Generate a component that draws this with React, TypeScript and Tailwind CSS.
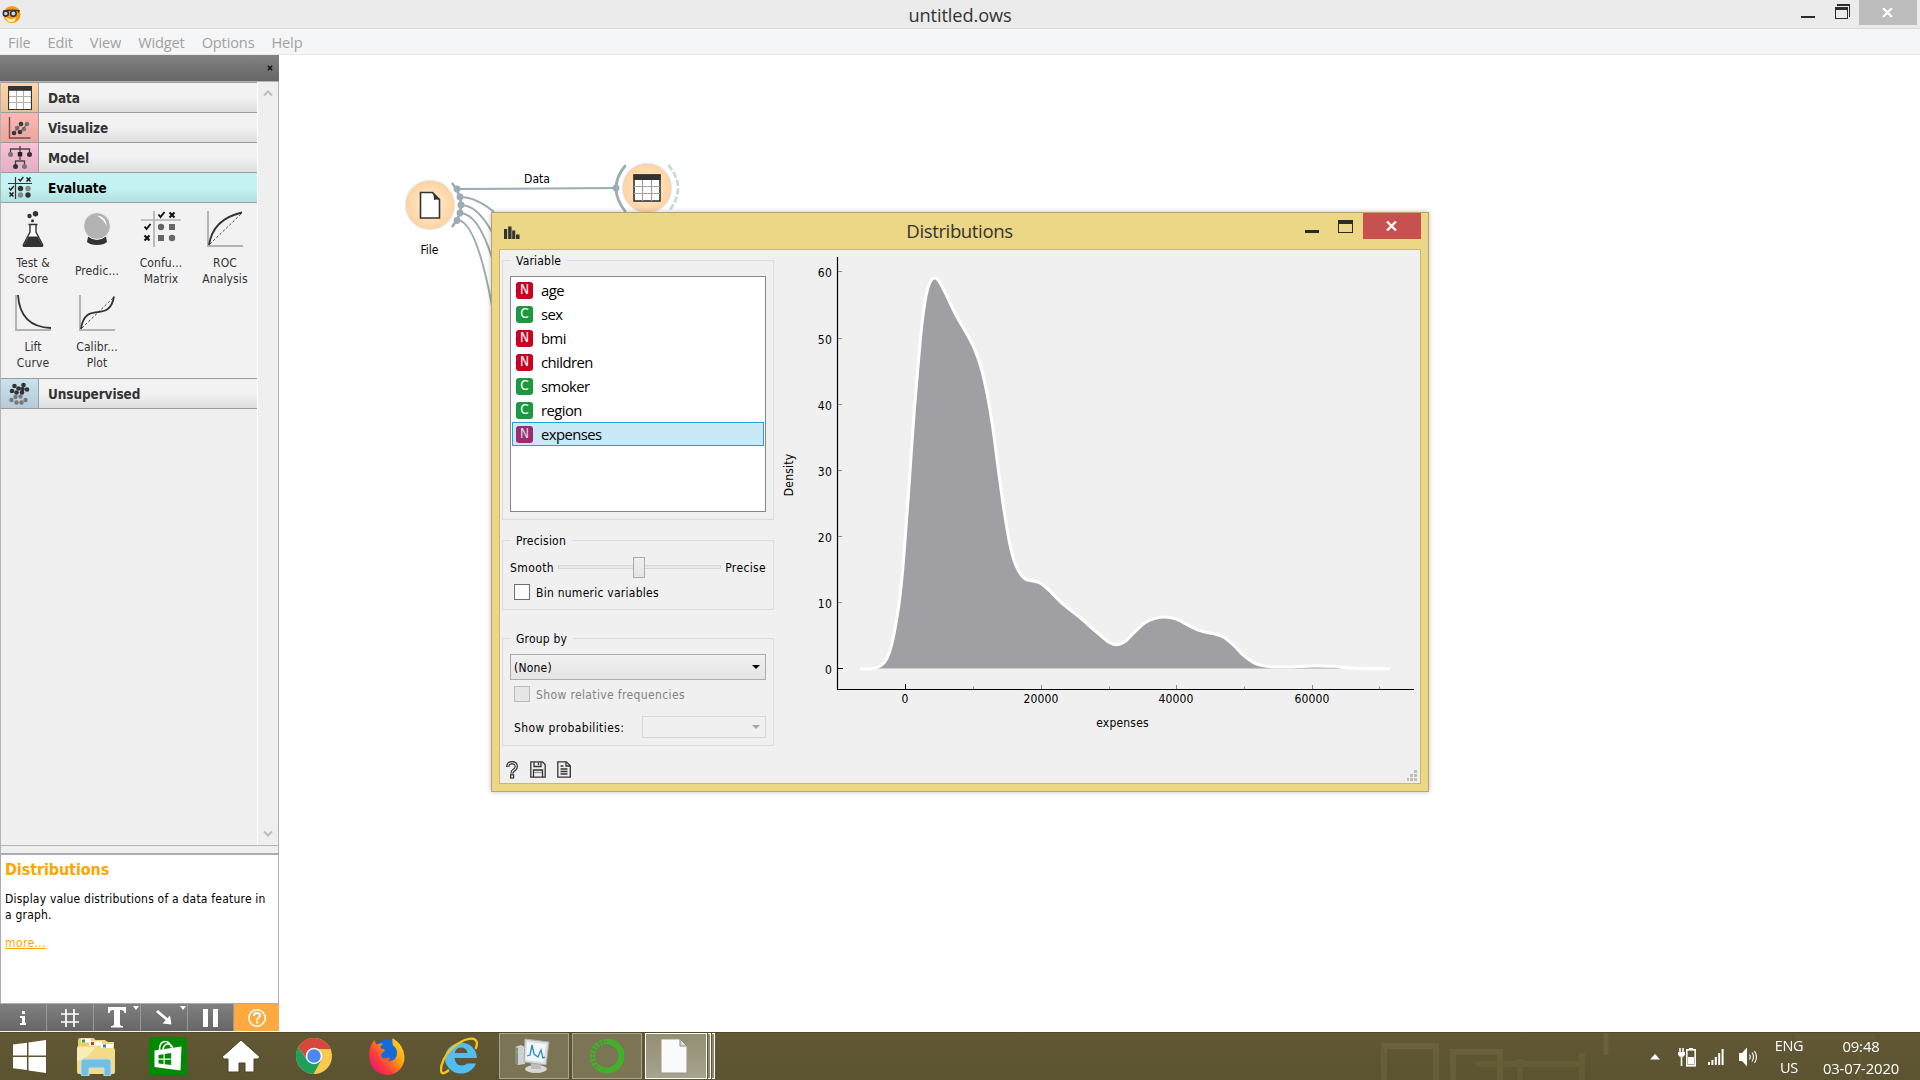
import React from "react";

const TAHOMA = "font-['DejaVu_Sans_Condensed','DejaVu_Sans',sans-serif] [font-stretch:condensed]";
const SEGOE = "font-['Open_Sans','Noto_Sans',sans-serif] [font-stretch:normal]";

/* ---------- category icons ---------- */

function TableIcon({ className = "" }: { className?: string }) {
  return (
    <svg viewBox="0 0 24 24" className={className}>
      <rect x="0.5" y="0.5" width="23" height="23" fill="#fff" stroke="#333" />
      <path d="M8.5 4v19M15.5 4v19M1 10.5h22M1 16.5h22" stroke="#b5b0aa" strokeWidth="1.2" />
      <rect x="0" y="0" width="24" height="4.8" fill="#333" />
      <path d="M0.5 0v23.5h23V0" fill="none" stroke="#333" strokeWidth="1.2" />
    </svg>
  );
}

function ScatterIcon() {
  return (
    <svg viewBox="0 0 24 24" className="h-6 w-6">
      <path d="M1.5 1v21h21" fill="none" stroke="#7a4a4a" strokeWidth="1.4" />
      <g fill="#333"><circle cx="6" cy="17" r="2.3" /><circle cx="12" cy="16" r="2.3" /><circle cx="13" cy="8" r="2.3" /></g>
      <g fill="#777"><circle cx="9" cy="12" r="2.3" /><circle cx="16" cy="13" r="2.3" /><circle cx="19" cy="8" r="2.3" /></g>
      <path d="M6 17l7-9M12 16l7-8" stroke="#555" strokeWidth="1" />
    </svg>
  );
}

function TreeIcon() {
  return (
    <svg viewBox="0 0 24 24" className="h-6 w-6">
      <path d="M12 0v8M2.500 8V3h19v5M12 8v6M7.500 19v-4h9v4" fill="none" stroke="#444" strokeWidth="1.300" />
      <rect x="9.800" y="6" width="4.400" height="4.400" fill="#222" />
      <circle cx="2.500" cy="8.500" r="2.500" fill="#777" />
      <circle cx="21.500" cy="8.500" r="2.500" fill="#333" />
      <circle cx="7.500" cy="20.500" r="2.500" fill="#333" />
      <circle cx="16.500" cy="20.500" r="2.500" fill="#777" />
    </svg>
  );
}

function EvaluateIcon() {
  return (
    <svg viewBox="0 0 24 24" className="h-6 w-6">
      <path d="M7.500 1v22M0 7.500h24" stroke="#333" strokeWidth="1.200" />
      <path d="M10.500 3l1.800 2 3-4M1 12l1.800 2 3-4" fill="none" stroke="#222" strokeWidth="1.400" />
      <path d="M18.500 1.500l4 4m0-4l-4 4M1.500 16.500l4 4m0-4l-4 4" stroke="#222" strokeWidth="1.600" />
      <circle cx="12.500" cy="12.500" r="2.700" fill="#333" /><circle cx="20" cy="12.500" r="2.700" fill="#888" />
      <circle cx="12.500" cy="19" r="2.700" fill="#888" /><circle cx="20" cy="19" r="2.700" fill="#333" />
    </svg>
  );
}

function ClusterIcon() {
  const dark = [[5, 4], [14, 3], [2.5, 9], [9, 6.5], [7, 10.5], [12.500, 10.500], [17.500, 7.500], [13, 7]];
  const light = [[6, 15], [11, 14.500], [2, 18], [7, 20.500], [12, 20.500], [16, 18]];
  return (
    <svg viewBox="0 0 24 24" className="h-6 w-6">
      <g transform="translate(1.500 0)">
        {light.map(([x, y]) => <circle key={`${x}-${y}`} cx={x} cy={y} r="2.200" fill="#777" />)}
        {dark.map(([x, y]) => <circle key={`${x}-${y}`} cx={x} cy={y} r="2.300" fill="#333" />)}
      </g>
    </svg>
  );
}

/* ---------- widget icons (36x36) ---------- */

function FlaskIcon() {
  return (
    <svg viewBox="0 0 36 36" className="h-9 w-9">
      <path d="M13.500 13.500h9M15 14v7L8.500 33.500q-.6 2 1.200 2h16.600q1.800 0 1.200-2L21 21v-7" fill="#fff" stroke="#333" strokeWidth="1.400" />
      <path d="M13.500 25.500h9l5 9q0 1-1 1H9.500q-1 0-1-1z" fill="#333" />
      <circle cx="14.500" cy="5" r="2.200" fill="#333" /><circle cx="20.500" cy="2.800" r="2.700" fill="#333" /><circle cx="17.500" cy="9.800" r="1.500" fill="#333" />
    </svg>
  );
}
function BallIcon() {
  return (
    <svg viewBox="0 0 36 36" className="h-9 w-9">
      <path d="M9 26h18l1 5q-3 3-10 3t-10-3z" fill="#333" />
      <circle cx="18" cy="15" r="13.400" fill="#b3b3b3" stroke="#f2f2f2" />
      <path d="M18 4.500q9.500 1 10 11.500-2-6.500-10-11.500z" fill="#fff" />
    </svg>
  );
}
function ConfusionIcon() {
  return (
    <svg viewBox="0 0 40 36" className="h-9 w-10">
      <path d="M13 0v36M0 9h40" stroke="#b3b3b3" strokeWidth="1.700" />
      <path d="M17.500 3.500l2 2.500 4-5M3.500 15.500l2 2.500 4-5" fill="none" stroke="#111" strokeWidth="1.900" />
      <path d="M28.500 1.500l5 5m0-5l-5 5M3.500 24.500l5 5m0-5l-5 5" stroke="#111" strokeWidth="2.100" />
      <g fill="#666"><circle cx="20" cy="16" r="3.200" /><rect x="28" y="13" width="6" height="6" /><rect x="17" y="24" width="6" height="6" /><circle cx="31" cy="27" r="3.200" /></g>
    </svg>
  );
}
function CurveIcon({ kind }: { kind: "roc" | "lift" | "calib" }) {
  const main = { roc: "M2 34Q6 8 35 1.500", lift: "M3 0Q5 32 36 33", calib: "M2 34C6 4 30 30 35 1.500" }[kind];
  return (
    <svg viewBox="0 0 36 36" className="h-9 w-9">
      <path d="M1 0v35h35" fill="none" stroke="#b3b3b3" strokeWidth="2" />
      {kind !== "lift" && <path d="M3 33L35 2" stroke="#444" strokeWidth="1" strokeDasharray="2.500 2" />}
      <path d={main} fill="none" stroke="#333" strokeWidth="1.800" />
    </svg>
  );
}

/* ---------- sidebar ---------- */

function Category({ icon, label, tint, active = false }: { icon: React.ReactNode; label: string; tint: string; active?: boolean }) {
  return (
    <div className={`flex h-[30px] border-b border-[#9c9c9c] ${active ? "bg-linear-to-b from-[#c3f3f3] from-50% to-[#b3e0e0]" : "bg-linear-to-b from-[#f2f2f2] from-50% to-[#dedede]"}`}>
      <div className={`flex w-[38px] items-center justify-center border-r ${active ? "border-transparent" : "border-[#9c9c9c]"} ${tint}`}>{icon}</div>
      <div className={`pl-[9px] text-[13.500px] leading-[30px] font-bold tracking-[-0.1px] ${active ? "text-black" : "text-[#333]"}`}>{label}</div>
    </div>
  );
}

function Tool({ icon, label }: { icon: React.ReactNode; label: string[] }) {
  return (
    <div className="flex h-[84px] w-16 flex-col items-center pt-[8px] text-[#333]">
      {icon}
      <div className="flex h-[38px] flex-col justify-center pt-[10px] text-center text-[12px] leading-4 tracking-[0.1px] whitespace-nowrap">
        {label.map((l) => <span key={l}>{l}</span>)}
      </div>
    </div>
  );
}

function Sidebar() {
  return (
    <aside className={`flex w-[279px] flex-col ${TAHOMA}`}>
      <div className="flex h-[26px] items-center justify-end bg-linear-to-b from-[#838383] to-[#666] pr-[6px]">
        <svg viewBox="0 0 6 6" className="h-[6px] w-[6px]"><path d="M.8.8l4.400 4.400m0-4.400L.8 5.200" stroke="#111" strokeWidth="1.400" /></svg>
      </div>
      <div className="flex h-[765px] border border-[#b0b4b4] bg-[#efefef]">
        <div className="w-[256px]">
          <div className="h-px bg-[#9c9c9c]" />
          <Category icon={<TableIcon className="h-6 w-6" />} label="Data" tint="bg-linear-to-b from-[#ffd5a5] to-[#e9c195]" />
          <Category icon={<ScatterIcon />} label="Visualize" tint="bg-linear-to-b from-[#ffb7b1] to-[#eaa6a0]" />
          <Category icon={<TreeIcon />} label="Model" tint="bg-linear-to-b from-[#fac1d9] to-[#e4aec5]" />
          <Category icon={<EvaluateIcon />} label="Evaluate" tint="" active />
          <div className="flex h-[176px] flex-wrap content-start border-b border-[#9c9c9c] bg-[#f2f2f2]">
            <Tool icon={<FlaskIcon />} label={["Test &", "Score"]} />
            <Tool icon={<BallIcon />} label={["Predic..."]} />
            <Tool icon={<ConfusionIcon />} label={["Confu...", "Matrix"]} />
            <Tool icon={<CurveIcon kind="roc" />} label={["ROC", "Analysis"]} />
            <Tool icon={<CurveIcon kind="lift" />} label={["Lift", "Curve"]} />
            <Tool icon={<CurveIcon kind="calib" />} label={["Calibr...", "Plot"]} />
          </div>
          <Category icon={<ClusterIcon />} label="Unsupervised" tint="bg-linear-to-b from-[#cae1ef] to-[#b5cbd9]" />
        </div>
        <div className="flex flex-1 flex-col items-center justify-between border-l border-white pt-[7px] pb-[7px]">
          <svg viewBox="0 0 10 8" className="h-2 w-[10px]"><path d="M1 6.500l4-4 4 4" fill="none" stroke="#bcbcbc" strokeWidth="2" /></svg>
          <svg viewBox="0 0 10 8" className="h-2 w-[10px]"><path d="M1 1.500l4 4 4-4" fill="none" stroke="#bcbcbc" strokeWidth="2" /></svg>
        </div>
      </div>
      <div className="h-[7px] border-x border-[#b0b4b4] bg-[#efefef]" />
      <div className="h-[151px] border border-t-2 border-[#a9acb2] bg-white px-1 pt-1 text-[12px] leading-4 text-black">
        <h2 className="pt-[1px] text-[16px] leading-[20px] font-bold tracking-[-0.1px] text-[#ffa500]">Distributions</h2>
        <p className="pt-[11px] tracking-[0.21px] whitespace-nowrap">Display value distributions of a data feature in<br />a graph.</p>
        <p className="pt-[12px] tracking-[0.4px] text-[#ffa500] underline">more...</p>
      </div>
      <div className="grid h-[27px] grid-cols-[47px_47px_47px_47px_46px_45px] bg-linear-to-b from-[#808080] to-[#666]">
        <div className="flex items-center justify-center border-r border-[#999]">
          <svg viewBox="0 0 8 16" className="h-4 w-2"><path d="M3 1h3v3H3zM1 6h5v7h1v2H1v-2h2V8H1z" fill="#fff" /></svg>
        </div>
        <div className="flex items-center justify-center border-r border-[#999]">
          <svg viewBox="0 0 18 18" className="h-[18px] w-[18px]"><path d="M5 0v18M13 0v18M0 5h18M0 13h18" stroke="#fff" strokeWidth="1.700" /></svg>
        </div>
        <div className="flex items-start justify-center border-r border-[#999]">
          <svg viewBox="0 0 46 27" className="h-[27px] w-[46px]">
            <path d="M14 3h18v6h-1.500q-.5-3-3-3H26v14q0 2 3 2v1.500H17V22q3 0 3-2V6h-1.500q-2.500 0-3 3H14z" fill="#fff" />
            <path d="M39 2h6l-3 4z" fill="#fff" />
          </svg>
        </div>
        <div className="flex items-start justify-center border-r border-[#999]">
          <svg viewBox="0 0 46 27" className="h-[27px] w-[46px]">
            <path d="M16 7l10 8.500" stroke="#fff" strokeWidth="2.800" /><path d="M30.500 20.500l-1.500-9-7.500 8z" fill="#fff" />
            <path d="M39 2h6l-3 4z" fill="#fff" />
          </svg>
        </div>
        <div className="flex items-center justify-center gap-[5px] border-r border-[#999]">
          <div className="h-[18px] w-[5px] bg-white" /><div className="h-[18px] w-[5px] bg-white" />
        </div>
        <div className="flex items-center justify-center bg-[#ffaa3e]">
          <svg viewBox="0 0 20 20" className="h-5 w-5">
            <circle cx="10" cy="10" r="8.200" fill="none" stroke="#fff" strokeWidth="1.600" />
            <path d="M7 8q0-3 3-3t3 2.600q0 1.400-1.700 2.400-1.300.8-1.300 2.300" fill="none" stroke="#fff" strokeWidth="1.900" />
            <rect x="9" y="13.400" width="2" height="2" fill="#fff" />
          </svg>
        </div>
      </div>
      <div className="h-px bg-[#f4f4f4]" />
    </aside>
  );
}

/* ---------- workflow canvas ---------- */

function Workflow() {
  return (
    <svg viewBox="279 55 1641 977" className="block h-[977px] w-[1641px]">
      <defs>
        <radialGradient id="node"><stop offset="0" stopColor="#fff1e0" /><stop offset="1" stopColor="#ffd39f" /></radialGradient>
        <filter id="glow" x="-30%" y="-30%" width="160%" height="160%"><feDropShadow dx="0" dy="0" stdDeviation="1.200" floodColor="#7f98a5" floodOpacity="0.7" /></filter>
      </defs>
      <g fill="none" stroke="#9cacb4" strokeWidth="2">
        <path d="M457 189L616 188" />
        <path d="M460 197Q476 197 494 212" />
        <path d="M461 205Q477 205 492 232" />
        <path d="M460 213Q478 213 492 258" />
        <path d="M457 220Q476 220 492 306" />
        <path d="M452 183Q470 205 452 227" strokeWidth="2.600" />
        <path d="M625 166Q607 188 625 211" strokeWidth="2.800" strokeLinecap="round" />
        <path d="M669 166Q687 188 669 211" stroke="#cdd6da" strokeWidth="2.800" strokeDasharray="4 4.500" strokeLinecap="round" />
      </g>
      <g fill="#9cacb4">
        <circle cx="457" cy="189" r="3.400" /><circle cx="460" cy="197" r="3.400" /><circle cx="461" cy="205" r="3.400" /><circle cx="460" cy="213" r="3.400" /><circle cx="457" cy="220.500" r="3.400" /><circle cx="616" cy="188" r="3.400" />
      </g>
      <circle cx="430" cy="205" r="24" fill="url(#node)" filter="url(#glow)" />
      <path d="M420.500 192.500h12l7 7v18.500h-19z" fill="#fff" stroke="#333" strokeWidth="1.600" />
      <path d="M432 192l8 8q-4-1-6 0 0-5-2-8z" fill="#333" />
      <circle cx="647" cy="188" r="24" fill="url(#node)" filter="url(#glow)" />
      <rect x="634" y="175" width="26" height="26" fill="#fff" stroke="#333" strokeWidth="1.600" />
      <path d="M642.500 180v21M651.500 180v21M634 186.500h26M634 193.500h26" stroke="#aaa19a" strokeWidth="1.200" />
      <rect x="633.500" y="174.500" width="27" height="5.500" fill="#333" />
      <g className={TAHOMA} fontSize="12" textAnchor="middle">
        <text x="537" y="183">Data</text>
        <text x="429.500" y="253.500">File</text>
      </g>
    </svg>
  );
}

/* ---------- density plot ---------- */

// Outline of the density curve, in thirds of a pixel from the plot's origin (840, 260).
const DENSITY: [number, number][] = [
  [60, 1226], [100, 1225], [122, 1217], [142, 1193], [156, 1150], [168, 1090], [181, 1000], [191, 895], [198, 800], [207, 680],
  [214, 575], [223, 450], [234, 320], [245, 200], [255, 125], [264, 83], [274, 60], [285, 54], [296, 62], [312, 91], [345, 160],
  [385, 230], [406, 273], [426, 333], [442, 405], [458, 500], [472, 605], [486, 710], [500, 800], [508, 845], [520, 895], [535, 932],
  [553, 955], [580, 963], [600, 969], [620, 984], [660, 1024], [720, 1073], [780, 1125], [808, 1147], [830, 1154], [852, 1147],
  [880, 1120], [915, 1088], [945, 1075], [974, 1071], [1005, 1076], [1045, 1096], [1080, 1112], [1120, 1121], [1150, 1131],
  [1180, 1155], [1215, 1190], [1245, 1210], [1280, 1219], [1330, 1221], [1420, 1218], [1480, 1219], [1530, 1224], [1590, 1226],
  [1650, 1226],
];

function smooth(src: [number, number][]) {
  const p = src.map(([x, y]) => [840 + x / 3, 260 + y / 3]);
  const slope = p.map((b, i) => {
    if (i === 0 || i === p.length - 1) return 0;
    const a = p[i - 1], c = p[i + 1];
    const h0 = b[0] - a[0], h1 = c[0] - b[0];
    return (((b[1] - a[1]) / h0) * h1 + ((c[1] - b[1]) / h1) * h0) / (h0 + h1);
  });
  let d = `M${p[0][0]} ${p[0][1]}`;
  for (let i = 0; i < p.length - 1; i++) {
    const b = p[i], c = p[i + 1];
    const k = (c[0] - b[0]) / 3;
    d += `C${b[0] + k} ${b[1] + slope[i] * k} ${c[0] - k} ${c[1] - slope[i + 1] * k} ${c[0]} ${c[1]}`;
  }
  return d;
}

function DensityPlot() {
  const curve = smooth(DENSITY);
  const yTicks = [0, 10, 20, 30, 40, 50, 60].map((v) => ({ v, y: Math.round(668 - v * 6.61) + 0.5 }));
  const xTicks = [0, 20000, 40000, 60000].map((v) => ({ v, x: Math.round(905 + v * 0.00678) + 0.5 }));
  return (
    <svg viewBox="774 250 646 533" className="block h-[533px] w-[646px] shrink-0">
      <path d={`${curve}V668.500H860z`} fill="#a0a0a4" />
      <path d={curve} fill="none" stroke="#fff" strokeWidth="3" />
      <path d="M837.500 257V690M837 689.500H1414" stroke="#000" strokeWidth="1.200" />
      <g className={TAHOMA} fontSize="12" fill="#000">
        {yTicks.map(({ v, y }) => (
          <g key={v}>
            <path d={`M838 ${y}h${v === 0 ? 5 : 4}`} stroke={v === 0 ? "#000" : "#888"} />
            <text x="832" y={y + 5} textAnchor="end">{v}</text>
          </g>
        ))}
        {xTicks.map(({ v, x }) => (
          <g key={v}>
            <path d={`M${x} 689v${v === 0 ? -5 : -4}`} stroke={v === 0 ? "#000" : "#888"} />
            <text x={x - 0.5} y="703" textAnchor="middle" letterSpacing="0.1">{v}</text>
          </g>
        ))}
        {[973.5, 1109.5, 1244.5, 1379.5].map((x) => <path key={x} d={`M${x} 689v-2.500`} stroke="#888" />)}
        <text x="1122.500" y="727" textAnchor="middle" letterSpacing="0.2">expenses</text>
        <text transform="translate(793 475) rotate(-90)" textAnchor="middle">Density</text>
      </g>
      <g fill="#bdbdbd">
        <rect x="1414" y="770" width="3" height="3" />
        <rect x="1410" y="774" width="3" height="3" /><rect x="1414" y="774" width="3" height="3" />
        <rect x="1407" y="778" width="2" height="3" /><rect x="1410" y="778" width="3" height="3" /><rect x="1414" y="778" width="3" height="3" />
      </g>
    </svg>
  );
}

/* ---------- dialog ---------- */

const VARIABLES = [
  { kind: "N", name: "age" }, { kind: "C", name: "sex" }, { kind: "N", name: "bmi" }, { kind: "N", name: "children" },
  { kind: "C", name: "smoker" }, { kind: "C", name: "region" }, { kind: "N", name: "expenses", selected: true },
];

function Group({ title, className, children }: { title: string; className: string; children: React.ReactNode }) {
  return (
    <fieldset className={`w-[272px] border border-[#dcdcdc] px-[7px] ${className}`}>
      <legend className="ml-[1px] h-4 pr-[6px] pl-[5px] leading-[18px]">{title}</legend>
      {children}
    </fieldset>
  );
}

function Dialog() {
  return (
    <section className="absolute top-[157px] left-[212px] flex h-[580px] w-[938px] flex-col border border-[#b5a568] bg-[#ebd785] px-[7px] pb-[7px] shadow-[0_0_5px_rgba(0,0,0,0.25)]">
      <header className={`grid h-9 grid-cols-[1fr_auto_1fr] ${SEGOE}`}>
        <div className="flex items-center pt-[2px] pl-[5px]">
          <svg viewBox="0 0 16 13" className="h-[13px] w-4"><path d="M0 13V3h3.200v10zM4.200 13V0.500h3.300V13zM8.200 13V4.500h3V13zM12 13V8.500h3.500V13z" fill="#333" /></svg>
        </div>
        <h1 className="-ml-[1px] text-[18.600px] leading-[35px] tracking-[-0.4px] text-[#333]">Distributions</h1>
        <div className="flex justify-end">
          <div className="mt-[17px] h-[3px] w-[14px] bg-[#2b2b2b]" />
          <div className="mt-[7px] ml-[19px] h-[13px] w-[15px] border border-t-4 border-[#2b2b2b]" />
          <div className="ml-[10px] flex h-[26px] w-[58px] items-center justify-center bg-[#c75050] pr-px">
            <svg viewBox="0 0 11 10" className="h-[10px] w-[11px]"><path d="M1 .5l9 9M10 .5l-9 9" stroke="#fff" strokeWidth="2.300" /></svg>
          </div>
        </div>
      </header>
      <div className={`flex h-[535px] overflow-hidden border border-[#c9b771] bg-[#f0f0f0] text-[12px] tracking-[0.2px] text-black ${TAHOMA}`}>
        <div className="w-[274px] shrink-0 pt-[2px] pl-[2px]">
          <Group title="Variable" className="h-[268px]">
            <ul className={`mt-2 h-[236px] border border-[#828790] bg-white p-[1px] text-[14.800px] ${SEGOE}`}>
              {VARIABLES.map(({ kind, name, selected }) => (
                <li key={name} className={`flex h-6 items-center border pl-[3px] ${selected ? "border-[#26a0da] bg-[#cbe8f6]" : "border-transparent"}`}>
                  <span className={`flex h-[17px] w-[17px] items-center justify-center rounded-[3px] text-[13.500px] leading-none tracking-normal ${TAHOMA} ${selected ? "bg-[#9c2c68] text-[#d5dcf0]" : kind === "N" ? "bg-[#cc0020] text-white" : "bg-[#1a993f] text-white"}`}>{kind}</span>
                  <span className="pl-2 leading-none tracking-[-0.55px]">{name}</span>
                </li>
              ))}
            </ul>
          </Group>
          <Group title="Precision" className="mt-3 h-[78px]">
            <div className="mt-2 flex h-[22px] items-center">
              <span className="w-12 pt-[1px] tracking-[0.4px] whitespace-nowrap">Smooth</span>
              <div className="flex h-[22px] w-[163px] items-center">
                <div className="h-1 w-[75px] border border-r-0 border-[#d6d6d6] bg-[#e7eaea]" />
                <div className="h-[21px] w-3 border border-[#acacac] bg-linear-to-b from-[#f0f0f0] to-[#e5e5e5]" />
                <div className="h-1 flex-1 border border-l-0 border-[#d6d6d6] bg-[#e7eaea]" />
              </div>
              <span className="flex-1 pt-[1px] text-right tracking-[0.35px] whitespace-nowrap">Precise</span>
            </div>
            <label className="mt-[6px] ml-1 flex h-4 items-center gap-[6px]">
              <span className="h-4 w-4 border border-[#707070] bg-white" /><span className="pt-[2px] tracking-[0.25px]">Bin numeric variables</span>
            </label>
          </Group>
          <Group title="Group by" className="mt-5 h-[116px]">
            <div className="mt-2 flex h-[26px] items-center justify-between border border-[#acacac] bg-linear-to-b from-[#f0f0f0] to-[#e5e5e5] pr-[5px] pl-[3px]">
              <span className="pt-[2px]">(None)</span>
              <svg viewBox="0 0 8 4" className="h-1 w-2"><path d="M0 0h8L4 4z" fill="#000" /></svg>
            </div>
            <label className="mt-[6px] ml-1 flex h-4 items-center gap-[6px] tracking-[0.37px] text-[#838383]">
              <span className="h-4 w-4 border border-[#bcbcbc] bg-[#e6e6e6]" /><span className="pt-[2px]">Show relative frequencies</span>
            </label>
            <div className="mt-[14px] flex h-[22px] items-center justify-between pl-1">
              <span className="pt-[1px] tracking-[0.4px]">Show probabilities:</span>
              <div className="flex h-[22px] w-[124px] items-center justify-end border border-[#d9d9d9] pr-[5px]">
                <svg viewBox="0 0 8 4" className="h-1 w-2"><path d="M0 0h8L4 4z" fill="#a5a5a5" /></svg>
              </div>
            </div>
          </Group>
          <div className="mt-[14px] flex h-[19px] items-center pl-1">
            <svg viewBox="0 0 12 18" className="h-[18px] w-3">
              <path d="M1.800 6Q1.500 1.800 6 1.800T10.200 5.500Q10.200 8 7.800 9.200 6 10.200 6 12.500" fill="none" stroke="#333" strokeWidth="3.400" />
              <path d="M1.800 5.200Q2 1.800 6 1.800T10.200 5.500Q10.200 8 7.800 9.200 6 10.200 6 11.700" fill="none" stroke="#eee" strokeWidth="1.100" />
              <rect x="4.600" y="13.800" width="3" height="3.200" fill="#eee" stroke="#333" strokeWidth="1.200" />
            </svg>
            <svg viewBox="0 0 16 17" className="ml-3 h-[17px] w-4" fill="none" stroke="#333" strokeWidth="1.300">
              <path d="M.8.8h11.700l2.700 3v12.400H.8z" /><path d="M4 1v4.500h7V1M8.500 1.500v2.500M3.500 16V9h9v7" /><path d="M4 11.500h8" stroke="#999" />
            </svg>
            <svg viewBox="0 0 14 17" className="ml-[11px] h-[17px] w-[14px]" fill="none" stroke="#333" strokeWidth="1.300">
              <path d="M.8.8h8.500l4 4v11.400H.8z" /><path d="M9 1v4h4M3.500 5h3M3.500 8h7M3.500 10.500h7M3.500 13h7" />
            </svg>
          </div>
        </div>
        <DensityPlot />
      </div>
    </section>
  );
}

/* ---------- taskbar ---------- */

function WindowsIcon() {
  return (
    <svg viewBox="0 0 33 33" className="h-[33px] w-[33px]"><path d="M0 4.500L14 2.800V15.500H0zM15.500 2.500L33 0v15.500H15.500zM0 17h14v13L0 28.300zM15.500 17H33v16l-17.500-2.500z" fill="#fff" /></svg>
  );
}
function ExplorerIcon() {
  return (
    <svg viewBox="0 0 40 39" className="h-[39px] w-10">
      <path d="M2 3q0-2 2-2h14l2 3h10q2 0 2 2v28H2z" fill="#e8cf6c" />
      <path d="M5 1.500h10v4H5z" fill="#fff" /><path d="M6 2.500h3v3H6z" fill="#3a9b45" />
      <path d="M38 5v30H14V6l3-3h12l2 2z" fill="#efd980" />
      <path d="M13 4.500h13v4H13z" fill="#fff" /><path d="M15 5h3v3h-3z" fill="#d8382e" />
      <path d="M25 7h12v4H25z" fill="#fff" /><path d="M27 7.500h3v3h-3z" fill="#2f7fc9" />
      <path d="M1 11q0-2 2-2h17l3 2h14q2 0 2 2v22q0 2-2 2H3q-2 0-2-2z" fill="#f2dc8a" />
      <path d="M1 24q12-3 18-14h-16q-2 0-2 2z" fill="#faedb4" />
      <path d="M5 37V25q0-3 3-3h24q3 0 3 3v12q0 2-2 2h-5v-8H13v8H7q-2 0-2-2z" fill="#74bde3" stroke="#b9e2f5" />
    </svg>
  );
}
function StoreIcon() {
  return (
    <svg viewBox="0 0 38 38" className="h-[38px] w-[38px]">
      <rect width="38" height="38" fill="#018a01" />
      <path d="M10.500 13q0-8.500 6-8.500 4 0 5.500 5.500M14 12q1-5 5-5 3.500 0 4.500 4" fill="none" stroke="#fff" strokeWidth="1.600" />
      <path d="M5.500 13.500L32.500 9.500 31.500 33.500 5.500 30z" fill="#fff" />
      <path d="M9.500 18l5-.7v4.200h-5zM15.700 17l6.500-1v5.500h-6.500zM9.500 22.700h5V27l-5-.6zM15.700 22.700h6.500V28l-6.500-.8z" fill="#018a01" />
    </svg>
  );
}
function HomeIcon() {
  return (
    <svg viewBox="0 0 40 34" className="h-[34px] w-10"><path d="M20 1L39 18l-2.500 2H33v13H24V24h-6v9H7V20H3.500L1 18z" fill="#fff" stroke="#4a4227" strokeWidth="1" /></svg>
  );
}
function ChromeIcon() {
  return (
    <svg viewBox="0 0 36 36" className="h-9 w-9">
      <circle cx="18" cy="18" r="18" fill="#fbc94e" />
      <path d="M2.400 9A18 18 0 0 1 33.600 9L34.600 11H18L11.500 22z" fill="#d6473c" />
      <path d="M2.400 9A18 18 0 0 0 17.500 36L25 22.500 11 22z" fill="#1f9f5c" />
      <circle cx="18" cy="18" r="8.300" fill="#f2f2f2" /><circle cx="18" cy="18" r="6.700" fill="#4a89f3" />
    </svg>
  );
}
function FirefoxIcon() {
  return (
    <svg viewBox="0 0 38 38" className="h-[38px] w-[38px]">
      <defs>
        <linearGradient id="fx" x1="1" y1="0.100" x2="0.100" y2="0.900"><stop offset="0" stopColor="#ffe21f" /><stop offset=".4" stopColor="#ff9a14" /><stop offset=".7" stopColor="#ff3f3a" /><stop offset="1" stopColor="#ec1170" /></linearGradient>
      </defs>
      <circle cx="19" cy="17" r="14.500" fill="#1769d8" />
      <path d="M24.500 1Q36 8 36.500 20A17.500 17.500 0 0 1 1.500 21Q0 10 6.500 3 7 6 8.500 7.500 12 6 15 6.500 12 9.500 12.500 11.500 16 11.500 17 13.500L13 17q0 8 8 7.500 8-1 8-9Q29 11 25 8.500 24 5 24.500 1z" fill="url(#fx)" />
      <path d="M11 19q3 3 7 2 3-1 4 .5-2 4.500-7 3.500-4-1-4-6z" fill="#ff5a24" />
    </svg>
  );
}
function IeIcon() {
  return (
    <svg viewBox="0 0 38 38" className="h-[38px] w-[38px]">
      <path d="M36 26.500A16 15.500 0 1 1 37 21H14.500Q15.500 28.500 21.500 28.500q4 0 5.500-2zM14.800 16H27.500Q26.500 10.500 21.200 10.500T14.800 16z" fill="#52bdf0" fillRule="evenodd" />
      <path d="M9 33Q-1 41 1.500 28.500 5 16 16 8T34 2q5 2 1.500 10" fill="none" stroke="#f6c414" strokeWidth="2.400" />
    </svg>
  );
}
function MonitorIcon() {
  return (
    <svg viewBox="0 0 40 36" className="h-9 w-10">
      <path d="M3 9l6-2 4 2v17l-7 1-3-2z" fill="#cfd0d0" /><path d="M3 9l3 1v17l-3-2z" fill="#888" /><rect x="4" y="13" width="2" height="2" fill="#4dc93d" />
      <ellipse cx="24" cy="31" rx="11" ry="4" fill="#d8d8d8" /><path d="M19 25h10v6H19z" fill="#bdbdbd" />
      <path d="M13 1l24 3-3 23-22-3z" fill="#dedede" stroke="#aaa" /><path d="M15 4l19 2-2.500 18L14 22z" fill="#eef8fd" />
      <path d="M15 18l3-1 2-10 2 9 4 3 3-7 2 8 2-1" fill="none" stroke="#3289b9" strokeWidth="1.300" />
    </svg>
  );
}
function AnacondaIcon() {
  return (
    <svg viewBox="0 0 36 36" className="h-9 w-9">
      <path d="M18 3.500A14.500 14.500 0 1 1 9.500 29.800" fill="none" stroke="#43b02a" strokeWidth="6" />
      <path d="M18 3.500A14.500 14.500 0 0 0 9.500 29.800" fill="none" stroke="#43b02a" strokeWidth="5.500" strokeDasharray="3.200 1" />
      <path d="M18 3.500A14.500 14.500 0 0 0 9.500 29.800" fill="none" stroke="#777051" strokeWidth="1" strokeDasharray="2 2" />
    </svg>
  );
}
function PageIcon() {
  return (
    <svg viewBox="0 0 28 36" className="h-9 w-7"><path d="M1 1h19l7 7v27H1z" fill="#fafafa" stroke="#9b9683" /><path d="M20 1v7h7z" fill="#ddd" stroke="#8e8a78" /></svg>
  );
}

function Taskbar() {
  return (
    <footer className={`relative flex h-12 items-center overflow-hidden border-t border-[#514a2a] bg-linear-to-b from-[#625836] to-[#5b5230] text-white ${SEGOE}`}>
      <svg viewBox="1340 1032 580 48" className="absolute top-0 right-0 h-12 w-[580px]" fill="none" stroke="#8f8458">
        <g opacity=".22">
          <rect x="1384" y="1045" width="52" height="45" strokeWidth="6" /><rect x="1453" y="1051" width="47" height="40" strokeWidth="6" />
          <path d="M1476 1063h106M1520 1058v22M1582 1052v28" strokeWidth="6" opacity=".7" /><path d="M1606 1032v22" strokeWidth="5" />
          <path d="M1795 1036h80M1860 1036v44" strokeWidth="5" opacity=".5" />
        </g>
      </svg>
      <div className="-mt-px flex w-[499px] items-center pl-[13px]">
        <WindowsIcon />
        <div className="ml-[30px]"><ExplorerIcon /></div>
        <div className="ml-[33px]"><StoreIcon /></div>
        <div className="ml-[34px]"><HomeIcon /></div>
        <div className="ml-[35px]"><ChromeIcon /></div>
        <div className="ml-[36px]"><FirefoxIcon /></div>
        <div className="ml-[34px]"><IeIcon /></div>
      </div>
      <div className="flex h-full gap-[3px]">
        <div className="flex h-[46px] w-[70px] items-center justify-center border border-[#aaa48d] bg-[#7b7455] pr-1"><MonitorIcon /></div>
        <div className="flex h-[46px] w-[70px] items-center justify-center border border-[#aaa48d] bg-[#7b7455]"><AnacondaIcon /></div>
        <div className="flex h-[46px]">
          <div className="flex w-[62px] items-center justify-center border border-white bg-linear-to-b from-[#938d73] to-[#a8a38e] pr-1"><PageIcon /></div>
          <div className="ml-px w-[3px] border border-l-0 border-white bg-[#8e876c]" />
          <div className="ml-px w-[3px] border border-l-0 border-white bg-[#8e876c]" />
        </div>
      </div>
      <div className="relative ml-auto flex h-full items-center">
        <svg viewBox="0 0 10 6" className="mr-[18px] h-[6px] w-[10px]"><path d="M5 0l5 5.500H0z" fill="#fff" /></svg>
        <svg viewBox="0 0 18 20" className="mr-3 h-5 w-[18px]">
          <path d="M2 1v4M5 1v4M3.500 9v10" stroke="#fff" strokeWidth="1.600" /><path d="M0 5h7v2.500Q6 10 3.500 10T0 7.500z" fill="#fff" />
          <rect x="8.800" y="2.800" width="8.400" height="16" fill="none" stroke="#fff" strokeWidth="1.600" /><rect x="11" y="1" width="4" height="2" fill="#fff" /><rect x="10" y="10" width="6" height="7.500" fill="#fff" />
        </svg>
        <svg viewBox="0 0 16 17" className="mr-[14px] h-[17px] w-4"><path d="M0 14h2v3H0zM3.400 12h2v5h-2zM6.800 9h2v8h-2zM10.200 5h2v12h-2zM13.600 1h2v16h-2z" fill="#fff" /></svg>
        <svg viewBox="0 0 20 20" className="mr-[15px] h-5 w-5"><path d="M1 6h3l5-5.500v19L4 14H1z" fill="#fff" /><path d="M11.500 7.500q1.500 2.500 0 5M14 5.500q3 4.500 0 9M16.500 4q4 6 0 12" fill="none" stroke="#fff" strokeWidth="1.100" /></svg>
        <div className="w-8 text-center text-[14.500px] leading-[22px] tracking-[-0.3px]">ENG<br />US</div>
        <div className="mr-[19px] ml-[16px] w-[80px] text-center text-[14.800px] leading-[22px] tracking-[-0.1px] whitespace-nowrap">09:48<br />03-07-2020</div>
      </div>
    </footer>
  );
}

export default function App() {
  return (
    <div className="flex h-[1080px] w-[1920px] flex-col overflow-hidden bg-white">
      <header className={`grid h-[29px] grid-cols-[1fr_auto_1fr] border-b border-[#d9d9d9] bg-[#ebebeb] ${SEGOE}`}>
        <div className="pt-[5px] pl-[2px]">
          <svg viewBox="0 0 20 20" className="h-[19px] w-[19px]">
            <circle cx="10.500" cy="10" r="9" fill="#f59a0c" />
            <path d="M4 13q6 4 11-.5-1 5.500-5.500 5.500T4 13z" fill="#fff2a8" />
            <path d="M1 6.500q9-2 17-.5l-1 2" fill="none" stroke="#2d3238" strokeWidth="1.400" />
            <circle cx="4" cy="9" r="2.700" fill="#c9d4dc" stroke="#2d3238" strokeWidth="1.600" /><circle cx="12" cy="9" r="2.900" fill="#c9d4dc" stroke="#2d3238" strokeWidth="1.600" />
          </svg>
        </div>
        <h1 className="pt-[1px] text-[18.200px] leading-[28px] tracking-[-0.1px] text-[#333]">untitled.ows</h1>
        <div className="flex justify-end pr-[3px]">
          <div className="mt-4 h-[2px] w-[14px] bg-[#2b2b2b]" />
          <svg viewBox="0 0 15 15" className="mt-1 ml-5 h-[15px] w-[15px]"><path d="M2 0h13v13h-1V2H2zM0 3h13v12H0zM1 6v8h11V6z" fill="#2b2b2b" fillRule="evenodd" /></svg>
          <div className="ml-[9px] flex h-[25px] w-[58px] items-center justify-center bg-[#bcbcbc] pr-[2px]">
            <svg viewBox="0 0 11 9" className="h-[9px] w-[11px]"><path d="M1 0l9 9M10 0L1 9" stroke="#fff" strokeWidth="2.200" /></svg>
          </div>
        </div>
      </header>
      <nav className={`flex h-[26px] items-center gap-[17px] border-b border-[#e8e8e8] bg-[#f5f6f7] pt-[2px] pl-2 text-[14.600px] tracking-[-0.15px] text-[#a0a0a0] ${SEGOE}`}>
        {["File", "Edit", "View", "Widget", "Options", "Help"].map((m) => <span key={m}>{m}</span>)}
      </nav>
      <main className="flex h-[977px]">
        <Sidebar />
        <div className="relative flex-1">
          <Workflow />
          <Dialog />
        </div>
      </main>
      <Taskbar />
    </div>
  );
}
